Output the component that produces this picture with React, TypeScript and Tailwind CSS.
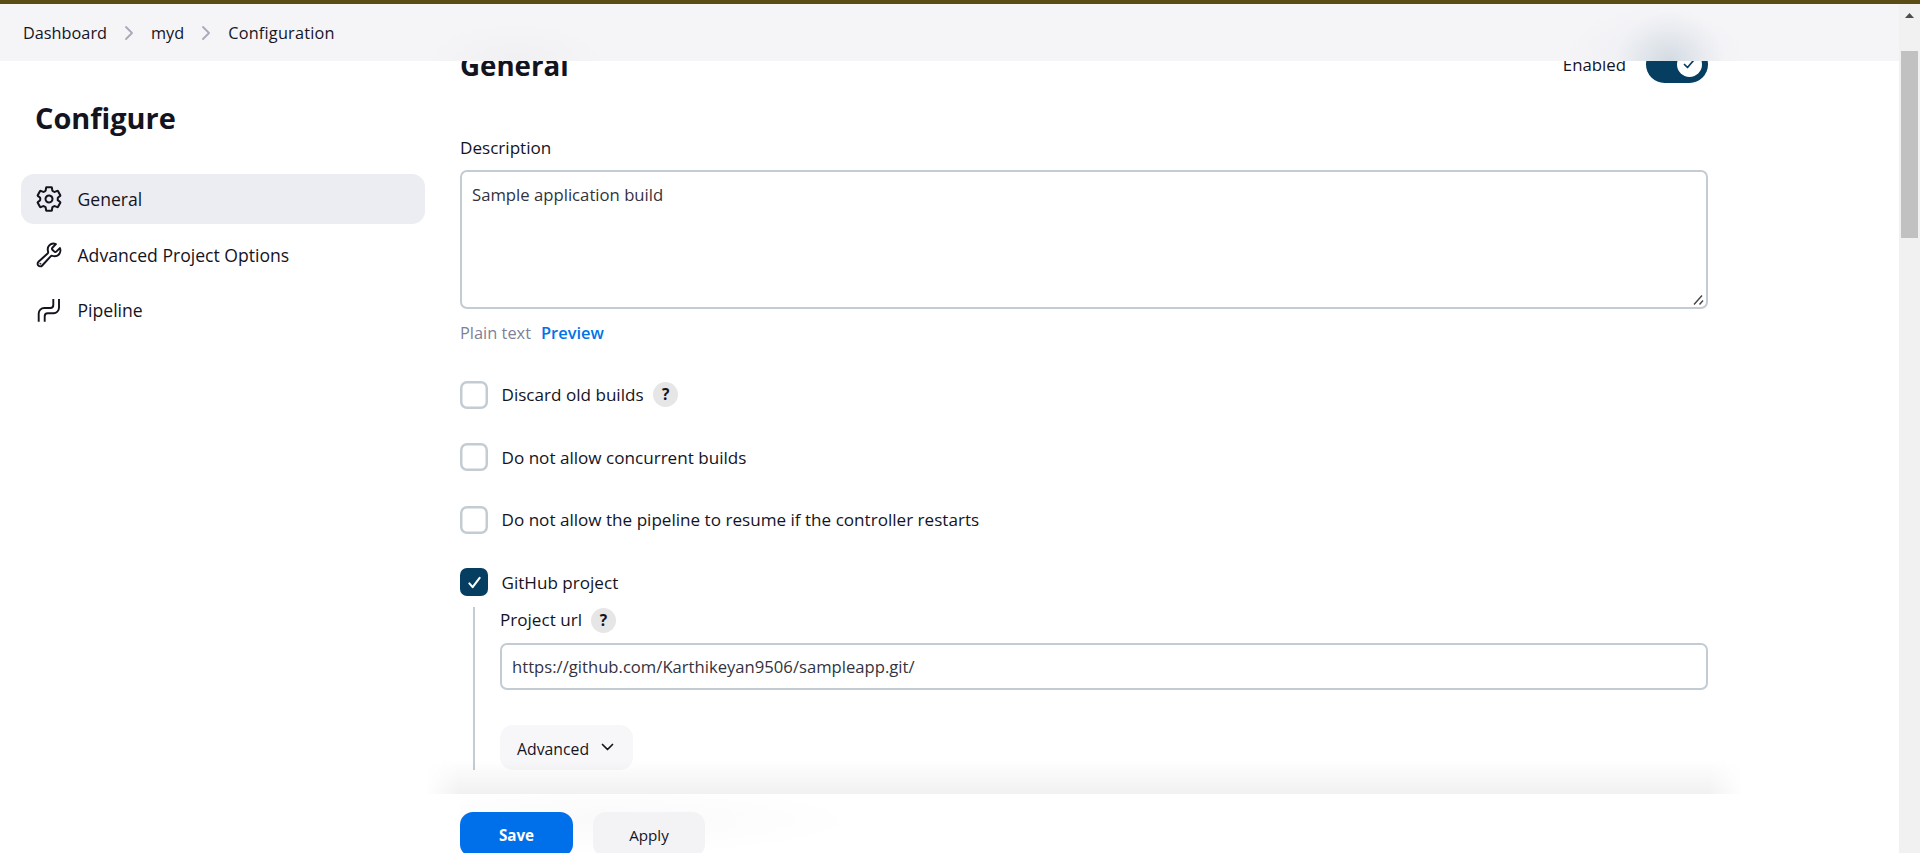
import React from "react";

function Chevron() {
  return (
    <svg className="mx-[17px] h-4 w-2.5 text-[#a9a9bb]" viewBox="0 0 10 16" fill="none" stroke="currentColor" strokeWidth="1.8" strokeLinecap="round" strokeLinejoin="round">
      <path d="M2 2l6 6-6 6" />
    </svg>
  );
}

function GearIcon() {
  return (
    <svg className="size-[28px]" viewBox="0 0 512 512" fill="none" stroke="currentColor" strokeWidth="37" strokeLinecap="round" strokeLinejoin="round">
      <path d="M262.29 192.31a64 64 0 1057.4 57.4 64.13 64.13 0 00-57.4-57.4zM416.39 256a154.34 154.34 0 01-1.53 20.79l45.21 35.46a10.81 10.81 0 012.45 13.75l-42.77 74a10.81 10.81 0 01-13.14 4.59l-44.9-18.08a16.11 16.11 0 00-15.17 1.75A164.48 164.48 0 01325 400.8a15.94 15.94 0 00-8.82 12.14l-6.73 47.89a11.08 11.08 0 01-10.68 9.17h-85.54a11.11 11.11 0 01-10.69-8.87l-6.72-47.82a16.07 16.07 0 00-9-12.22 155.3 155.3 0 01-21.46-12.57 16 16 0 00-15.11-1.71l-44.89 18.07a10.81 10.81 0 01-13.14-4.58l-42.77-74a10.8 10.8 0 012.45-13.75l38.21-30a16.05 16.05 0 006-14.08c-.36-4.17-.58-8.33-.58-12.5s.21-8.27.58-12.35a16 16 0 00-6.07-13.94l-38.19-30A10.81 10.81 0 0149.48 186l42.77-74a10.81 10.81 0 0113.14-4.59l44.9 18.08a16.11 16.11 0 0015.17-1.75A164.48 164.48 0 01187 111.2a15.94 15.94 0 008.82-12.14l6.73-47.89A11.08 11.08 0 01213.23 42h85.54a11.11 11.11 0 0110.69 8.87l6.72 47.82a16.07 16.07 0 009 12.22 155.3 155.3 0 0121.46 12.57 16 16 0 0015.11 1.71l44.89-18.07a10.81 10.81 0 0113.14 4.58l42.77 74a10.8 10.8 0 01-2.45 13.75l-38.21 30a16.05 16.05 0 00-6.05 14.08c.33 4.14.55 8.3.55 12.47z" />
    </svg>
  );
}

function WrenchIcon() {
  return (
    <svg className="size-[28px]" viewBox="0 0 512 512" fill="none" stroke="currentColor" strokeWidth="36" strokeLinecap="round" strokeLinejoin="round">
      <path d="M393.87 190a32.1 32.1 0 01-45.25 0l-26.57-26.57a32.09 32.09 0 010-45.26L382.19 58a1 1 0 00-.3-1.64c-38.82-16.64-89.15-8.16-121.11 23.57-30.58 30.35-32.32 76-21.12 115.84a31.93 31.93 0 01-9.06 32.08L64 380a48.17 48.17 0 1068 68l153.86-167a31.93 31.93 0 0131.6-9.13c39.54 10.59 84.54 8.6 114.72-21.19 32.49-32 39.5-88.56 23.75-120.93a1 1 0 00-1.6-.26z" />
      <circle cx="96" cy="416" r="10" fill="currentColor" strokeWidth="10" />
    </svg>
  );
}

function PipelineIcon() {
  return (
    <svg className="size-[30px]" viewBox="0 0 30 30" fill="none" stroke="currentColor" strokeWidth="1.9">
      <path d="M4.700 26.800v-8.300a5.500 5.500 0 0 1 5.500-5.500h6.100a3 3 0 0 0 3-3V4" />
      <path d="M10.700 26.800v-5.500a3 3 0 0 1 3-3h5.800a5.500 5.500 0 0 0 5.500-5.500V4" />
    </svg>
  );
}

function Help() {
  return (
    <span className="flex size-[25px] items-center justify-center rounded-full bg-[#e6e6e7] text-[15.5px] leading-none font-bold">?</span>
  );
}

function NavItem({ icon, label, active }: { icon: React.ReactNode; label: string; active?: boolean }) {
  return (
    <a className={active ? "flex h-[50px] items-center gap-[13.5px] rounded-[13px] bg-[#ecedf3] pl-[13px]" : "flex h-[50px] items-center gap-[13.5px] rounded-[13px] pl-[13px]"}>
      <span className="flex size-[30px] items-center justify-center">{icon}</span>
      <span>{label}</span>
    </a>
  );
}

function CheckRow({ label, checked, help }: { label: string; checked?: boolean; help?: boolean }) {
  return (
    <div className="flex h-[28px] items-center">
      <span className={checked ? "flex size-[28px] items-center justify-center rounded-[7px] bg-[#063e61]" : "size-[28px] rounded-[7px] bg-white shadow-[inset_0_0_0_2.5px_#c3ccd2]"}>
        {checked && (
          <svg className="size-[15px]" viewBox="0 0 16 16" fill="none" stroke="white" strokeWidth="2.2" strokeLinecap="round" strokeLinejoin="round">
            <path d="M2.500 9l3.500 4 7.500-10" />
          </svg>
        )}
      </span>
      <span className="mr-[9.5px] ml-[13.5px] pt-px text-[17.1px]">{label}</span>
      {help && <Help />}
    </div>
  );
}

export default function App() {
  return (
    <div className="flex h-[853px] w-[1920px] flex-col overflow-hidden bg-white font-['Open_Sans','Noto_Sans',sans-serif] text-[17px] leading-6 text-[#14141f]">
      <div className="h-1 shrink-0 bg-[#5b4b15]" />
      <div className="flex min-h-0 grow">
        <div className="flex min-w-0 grow flex-col">
          <header className="relative flex h-[57px] shrink-0 items-center overflow-hidden bg-[#f5f5f8] pl-[23px] text-[16.3px]">
            <div className="absolute top-[7px] left-[1615px] h-[100px] w-[110px] bg-[radial-gradient(closest-side,rgba(6,62,97,0.12),rgba(6,62,97,0.06)_45%,transparent)]" />
            <div className="absolute top-0 left-[1560px] h-[114px] w-[190px] bg-[radial-gradient(closest-side,rgba(6,62,97,0.03),transparent)]" />
            <div className="absolute top-[17px] left-[420px] h-[80px] w-[190px] bg-[radial-gradient(closest-side,rgba(20,20,31,0.02),transparent)]" />
            <span>Dashboard</span>
            <Chevron />
            <span>myd</span>
            <Chevron />
            <span className="tracking-[0.2px]">Configuration</span>
          </header>
          <div className="flex min-h-0 grow">
            <aside className="flex w-[425px] shrink-0 flex-col pl-[21px]">
              <h1 className="mt-[37px] mb-[36px] pl-3.5 text-[28.9px] leading-10 font-bold">Configure</h1>
              <nav className="flex flex-col gap-[5.5px] text-[17.6px]">
                <NavItem active icon={<GearIcon />} label="General" />
                <NavItem icon={<WrenchIcon />} label="Advanced Project Options" />
                <NavItem icon={<PipelineIcon />} label="Pipeline" />
              </nav>
            </aside>
            <main className="ml-[35px] flex w-[1248px] shrink-0 flex-col">
              <div className="-mx-[35px] h-[733px] shrink-0 overflow-hidden px-[35px]">
                <div className="-mt-[16px] flex h-10 items-center">
                  <h2 className="text-[27.7px] leading-10 font-bold">General</h2>
                  <span className="mr-[20px] ml-auto text-[16.8px]">Enabled</span>
                  <span className="-mt-[2px] flex h-[37px] w-[62px] items-center justify-end rounded-full bg-[#063e61] pr-[6px]">
                    <span className="flex size-[25px] items-center justify-center rounded-full bg-white text-[#063e61]">
                      <svg className="mr-[2px] size-[12px]" viewBox="0 0 12 12" fill="none" stroke="currentColor" strokeWidth="1.7" strokeLinecap="round" strokeLinejoin="round">
                        <path d="M1.500 6.500l3 3 6-7" />
                      </svg>
                    </span>
                  </span>
                </div>
                <div className="mt-[51px] h-6 text-[17.1px]">Description</div>
                <div className="relative mt-[10px] h-[139px] rounded-[7px] border-2 border-[#c3ccd2] bg-white px-2.5 pt-[11px] text-[16.7px] text-[#333340]">
                  Sample application build
                  <svg className="absolute right-0.5 bottom-0.5 size-[11px]" viewBox="0 0 11 11" stroke="#444" strokeWidth="1.4">
                    <path d="M1 10.500L9 1.500M6.500 10.500l3.500-4" />
                  </svg>
                </div>
                <div className="mt-[12px] flex h-6 gap-[10px] text-[16.4px]">
                  <span className="text-[#7f7f98]">Plain text</span>
                  <span className="font-semibold text-[#0073ea]">Preview</span>
                </div>
                <div className="mt-[35.8px] flex flex-col gap-[34.5px]">
                  <CheckRow label="Discard old builds" help />
                  <CheckRow label="Do not allow concurrent builds" />
                  <CheckRow label="Do not allow the pipeline to resume if the controller restarts" />
                  <CheckRow label="GitHub project" checked />
                </div>
                <div className="mt-[11px] ml-[13px] h-[163px] border-l-2 border-[#c3ccd2] pl-[25px]">
                  <div className="flex h-[26px] items-center gap-[9px] text-[17.1px]">
                    <span>Project url</span>
                    <Help />
                  </div>
                  <div className="mt-[10px] flex h-[47px] items-center rounded-[7px] border-2 border-[#c3ccd2] bg-white px-2.5 pt-px text-[16.65px] text-[#333340]">
                    https://github.com/Karthikeyan9506/sampleapp.git/
                  </div>
                  <button className="mt-[35px] flex h-[45px] w-[133px] items-center gap-[12px] rounded-[13px] bg-[#f7f7fa] pl-[17px] text-[15.8px] font-medium">
                    <span className="pt-0.5">Advanced</span>
                    <svg className="-mt-0.5 h-[8px] w-[13px]" viewBox="0 0 13 8" fill="none" stroke="currentColor" strokeWidth="1.7" strokeLinecap="round" strokeLinejoin="round">
                      <path d="M1.500 1.500l5 5 5-5" />
                    </svg>
                  </button>
                </div>
                <div className="-mx-[35px] -mt-[10px] h-[34px] bg-[linear-gradient(to_bottom,transparent,rgba(0,0,0,0.055))] [mask-image:linear-gradient(to_right,transparent,black_35px,black_calc(100%-35px),transparent)]" />
              </div>
              <div className="flex gap-5 bg-[radial-gradient(ellipse_250px_36px_at_150px_26px,rgba(20,20,31,0.025),transparent)] pt-[18px] text-[15.2px]">
                <button className="h-[45px] w-[113px] rounded-[13px] bg-[#0070ea] font-bold text-white">Save</button>
                <button className="h-[45px] w-[112px] rounded-[13px] bg-[#f3f3f6] font-medium">Apply</button>
              </div>
            </main>
          </div>
        </div>
        <div className="flex w-[21px] shrink-0 flex-col items-center bg-[#f1f1f1]">
          <svg className="mt-[9px] h-[5px] w-[9px]" viewBox="0 0 9 5">
            <path d="M0 5L4.500 0 9 5z" fill="#4d4d4d" />
          </svg>
          <div className="mt-[33px] h-[187px] w-[17px] bg-[#c1c1c1]" />
        </div>
      </div>
    </div>
  );
}
